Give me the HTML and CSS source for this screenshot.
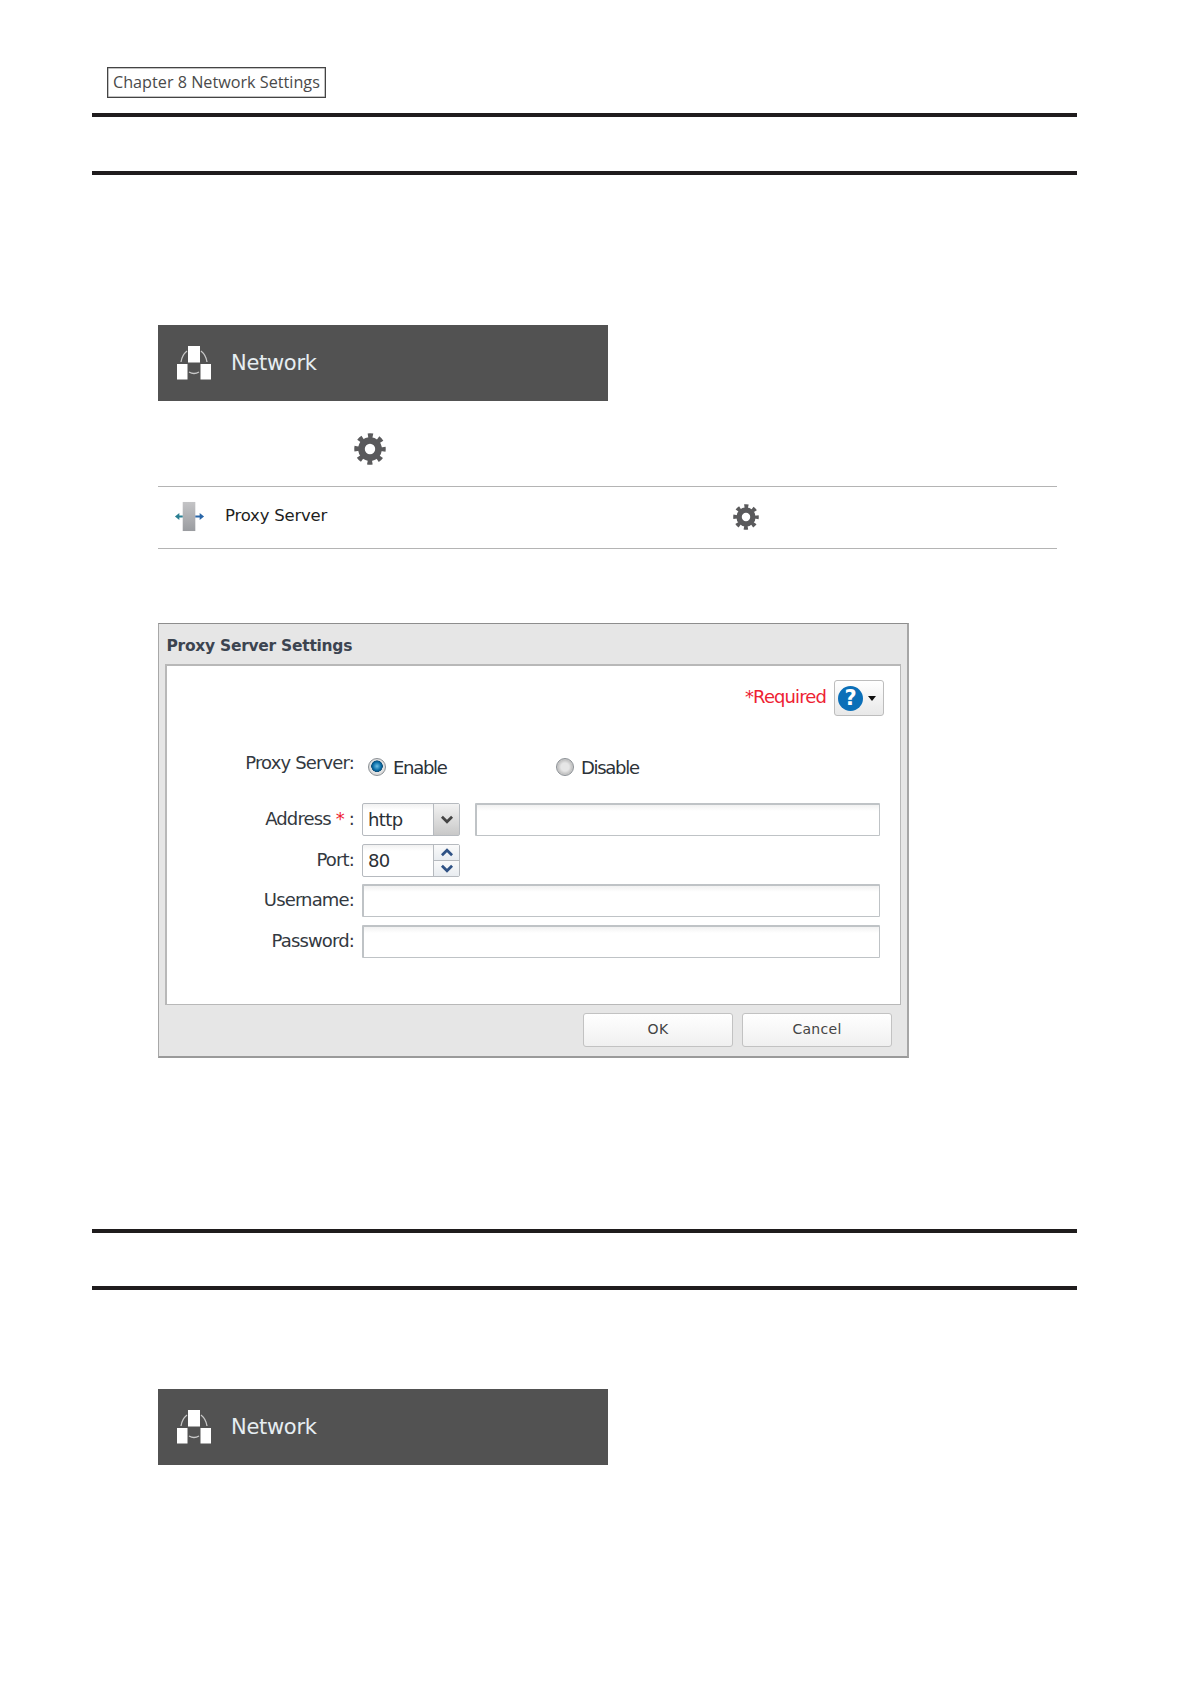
FILE: index.html
```html
<!DOCTYPE html>
<html lang="en">
<head>
<meta charset="utf-8">
<title>Chapter 8 Network Settings</title>
<link rel="stylesheet" href="styles.css">
</head>
<body>
<svg class="defs" width="0" height="0" aria-hidden="true">
  <symbol id="gear" viewBox="0 0 24 24">
    <circle cx="12" cy="12" r="6.4" fill="none" stroke="#5a5a5c" stroke-width="5"/>
    <circle cx="12" cy="12" r="10" fill="none" stroke="#5a5a5c" stroke-width="3.6" stroke-dasharray="3.7 4.154" stroke-dashoffset="1.85"/>
  </symbol>
  <symbol id="net" viewBox="0 0 34 34">
    <rect x="11" y="0" width="12" height="16.5" fill="#fff"/>
    <rect x="0" y="18" width="10.5" height="15.5" fill="#fff"/>
    <rect x="23.5" y="18" width="10.5" height="15.5" fill="#fff"/>
    <path d="M4 16 Q5 9 10 5 M30 16 Q29 9 24 5 M12 26 Q17 29 22 26" fill="none" stroke="#c8c8c8" stroke-width="1.3"/>
  </symbol>
</svg>
<main class="page">
  <div class="chapter">Chapter 8 Network Settings</div>
  <div class="rule rule-head"></div>
  <div class="rule rule-sub"></div>

  <section class="content first">
    <div class="netbar">
      <svg class="neticon"><use href="#net"/></svg>
      <span class="nettitle">Network</span>
    </div>
    <div class="gearline"><svg class="gear-lg"><use href="#gear"/></svg></div>
    <div class="listrow">
      <svg class="proxyicon" viewBox="0 0 32 32">
        <defs>
          <linearGradient id="pillar" x1="0" y1="0" x2="0" y2="1">
            <stop offset="0" stop-color="#c4c4c6"/>
            <stop offset="1" stop-color="#9a9ca0"/>
          </linearGradient>
        </defs>
        <rect x="9" y="1" width="13" height="30" fill="url(#pillar)"/>
        <path d="M1 16 L5.5 12.5 V15 H9 V17 H5.5 V19.5Z" fill="#2a7f92"/>
        <path d="M31 16 L26.5 12.5 V15 H22 V17 H26.5 V19.5Z" fill="#2a66a8"/>
      </svg>
      <span class="listname">Proxy Server</span>
      <svg class="gear-sm"><use href="#gear"/></svg>
    </div>

    <div class="dialog">
      <div class="dialog-title">Proxy Server Settings</div>
      <div class="dialog-body">
        <div class="topline">
          <span class="required">*Required</span>
          <span class="helpbtn">
            <span class="helpdot">?</span>
            <span class="caret"></span>
          </span>
        </div>
        <div class="form">
          <div class="proxyrow">
            <span class="label label-proxy">Proxy Server:</span>
            <label class="radio radio-enable"><span class="dot on"></span>Enable</label>
            <label class="radio"><span class="dot"></span>Disable</label>
          </div>
          <div class="row row-address">
            <span class="label">Address <span class="star">*</span> :</span>
            <div class="combo">
              <span class="value">http</span>
              <span class="arrow">
                <svg class="chev" viewBox="0 0 12 8"><path d="M1.5 1.5 L6 6 L10.5 1.5" fill="none" stroke="#444" stroke-width="2.4"/></svg>
              </span>
            </div>
            <div class="input input-url"></div>
          </div>
          <div class="row row-port">
            <span class="label">Port:</span>
            <div class="combo">
              <span class="value">80</span>
              <span class="spin">
                <span class="spinbtn"><svg class="chev" viewBox="0 0 12 8"><path d="M1.5 6.5 L6 2 L10.5 6.5" fill="none" stroke="#2f5285" stroke-width="2.4"/></svg></span>
                <span class="spinbtn"><svg class="chev" viewBox="0 0 12 8"><path d="M1.5 1.5 L6 6 L10.5 1.5" fill="none" stroke="#2f5285" stroke-width="2.4"/></svg></span>
              </span>
            </div>
          </div>
          <div class="row">
            <span class="label">Username:</span>
            <div class="input input-wide"></div>
          </div>
          <div class="row">
            <span class="label">Password:</span>
            <div class="input input-wide"></div>
          </div>
        </div>
      </div>
      <div class="dialog-foot">
        <span class="btn">OK</span>
        <span class="btn">Cancel</span>
      </div>
    </div>
  </section>

  <div class="rule rule-head2"></div>
  <div class="rule rule-sub2"></div>

  <section class="content second">
    <div class="netbar">
      <svg class="neticon"><use href="#net"/></svg>
      <span class="nettitle">Network</span>
    </div>
  </section>
</main>
</body>
</html>
```

FILE: styles.css
```css
* { box-sizing: border-box; }
html, body { margin: 0; padding: 0; background: #fff; }
body { font-family: "Noto Sans", "DejaVu Sans", sans-serif; color: #222; }
.defs { display: block; height: 0; }

.page { width: 1191px; height: 1684px; padding: 67px 114px 0 92px; overflow: hidden; }

.chapter {
  width: 219px; height: 31px; margin-left: 15px;
  border: 1px solid #444;
  box-shadow: inset 0 0 0 0.5px #888;
  font-family: "Open Sans", "Noto Sans", sans-serif;
  font-size: 16.2px; line-height: 28px; padding-left: 5px;
  color: #4a4a4a; white-space: nowrap;
}
.rule { height: 4px; background: #1f1c1d; }
.rule-head { margin-top: 15px; }
.rule-sub { margin-top: 54px; }
.rule-sub2 { margin-top: 53px; }
.rule-head2 { margin-top: 171px; }

.content { margin-left: 66px; }
.first { margin-top: 150px; }
.second { margin-top: 99px; }

.netbar {
  width: 450px; height: 76px; background: #525252;
  display: flex; align-items: center; padding-left: 19px;
}
.neticon { width: 34px; height: 34px; margin-top: -1px; }
.nettitle {
  margin-left: 20px; color: #e6eef2; font-family: "DejaVu Sans", sans-serif;
  font-size: 21px; letter-spacing: -0.3px;
}

.gearline { height: 32px; margin-top: 32px; padding-left: 196px; }
.gear-lg { width: 32px; height: 32px; display: block; }

.listrow {
  width: 899px; height: 63px; margin-top: 21px;
  border-top: 1px solid #b4b4b4; border-bottom: 1px solid #b4b4b4;
  display: flex; align-items: center; padding-left: 16px;
}
.proxyicon { width: 31px; height: 31px; flex: none; margin-top: -2px; }
.listname {
  margin-left: 20px; width: 508px; margin-top: -4px; font-family: "DejaVu Sans", sans-serif;
  font-size: 16.5px; letter-spacing: -0.2px; color: #1e1e1e;
}
.gear-sm { width: 26px; height: 26px; margin-top: -2px; }

.dialog {
  width: 751px; height: 435px; margin-top: 74px;
  background: #e6e6e6;
  border: 1px solid #a8a8a8; border-top-color: #8d8d8d; border-bottom: 2px solid #9a9a9a;
  border-right: 2px solid #a6a6a6;
  padding: 0 6px 0 6px;
  display: flex; flex-direction: column;
}
.dialog-title {
  height: 40px; padding: 12px 0 0 1.5px;
  font-family: "DejaVu Sans", sans-serif; font-weight: 700; font-size: 15.5px;
  letter-spacing: -0.27px; color: #3c4450; line-height: 20px;
}
.dialog-body {
  height: 341px; background: #fff; border: 2px solid #b8b8b8; border-right-width: 1px; border-bottom-width: 1px;
  padding: 14px 16px 0 0;
}
.topline { display: flex; justify-content: flex-end; align-items: center; height: 36px; }
.required {
  color: #ee2233; font-family: "DejaVu Sans", sans-serif; font-size: 18px;
  letter-spacing: -0.9px; margin-right: 8px; margin-top: -3px;
}
.helpbtn {
  width: 50px; height: 36px; border: 1px solid #bdbdbd; border-radius: 3px;
  background: linear-gradient(#fff, #e8e8e8);
  display: flex; align-items: center; padding-left: 3px;
}
.helpdot {
  width: 25px; height: 25px; border-radius: 50%; background: #0b6fb8;
  color: #fff; font-family: "DejaVu Sans", sans-serif; font-weight: 700; font-size: 21px;
  line-height: 25px; text-align: center;
}
.caret {
  margin-left: 5px; margin-top: 1px; width: 0; height: 0;
  border-left: 4px solid transparent; border-right: 4px solid transparent; border-top: 5px solid #111;
}

.form { padding-top: 34px; display: flex; flex-direction: column; }
.label {
  width: 187px; text-align: right; flex: none;
  font-family: "DejaVu Sans", sans-serif; font-size: 18px; letter-spacing: -0.85px; color: #33393f;
}
.proxyrow { display: flex; align-items: center; height: 34px; }
.label-proxy { margin-top: -9px; }
.radio {
  display: flex; align-items: center; gap: 7px;
  font-family: "DejaVu Sans", sans-serif; font-size: 18px; letter-spacing: -1.3px; color: #2c3238;
}
.radio-enable { margin-left: 14px; width: 188px; }
.dot {
  width: 18px; height: 18px; border-radius: 50%; flex: none;
  border: 1px solid #8a8f94;
  background: radial-gradient(circle, #e6e6e6 0 4px, #c4c4c4 7px, #eee 100%);
}
.dot.on {
  background: radial-gradient(circle at 50% 45%, #6fc0e6 0, #0a6ea8 4px, #0d4f7a 5.5px, #e4e4e4 6px, #ccc 100%);
}

.row { display: flex; align-items: center; height: 33px; margin-bottom: 8px; }
.row-address { margin-top: 19px; }
.row-port { margin-bottom: 7px; }
.row .label { margin-top: -3px; }
.star { color: #ee2233; }
.combo {
  margin-left: 8px; width: 98px; height: 33px; display: flex;
  border: 1px solid #b6babf; border-radius: 2px; background: linear-gradient(#f1f1f1, #fff 6px);
}
.value {
  flex: 1; font-family: "DejaVu Sans", sans-serif; font-size: 18px; letter-spacing: -0.6px;
  color: #2b3036; padding-left: 5px; line-height: 31px;
}
.arrow {
  width: 26px; border-left: 1px solid #b6babf; background: linear-gradient(#f2f2f2, #c8c8c8);
  display: flex; align-items: center; justify-content: center;
}
.chev { width: 14px; height: 9px; display: block; }
.spin { width: 26px; border-left: 1px solid #b6babf; display: flex; flex-direction: column; }
.spinbtn {
  flex: 1; display: flex; align-items: center; justify-content: center;
  background: linear-gradient(#fafafa, #e8ecf0);
}
.spinbtn + .spinbtn { border-top: 1px solid #b6babf; }
.input {
  height: 33px; border: 2px solid #bfc3c6; border-width: 2px 1px 1px 2px; border-radius: 1px;
  background: linear-gradient(#f1f1f1, #fff 6px);
}
.input-url { width: 405px; margin-left: 15px; }
.input-wide { width: 518px; margin-left: 8px; }

.dialog-foot { display: flex; justify-content: flex-end; gap: 9px; padding: 8px 9px 0 0; }
.btn {
  width: 150px; height: 34px; border: 1px solid #c2c2c2; border-radius: 3px;
  background: linear-gradient(#fff, #f0f0f0);
  font-family: "DejaVu Sans", sans-serif; font-size: 14px; letter-spacing: 0.3px;
  text-align: center; line-height: 31px; color: #444;
}
```
